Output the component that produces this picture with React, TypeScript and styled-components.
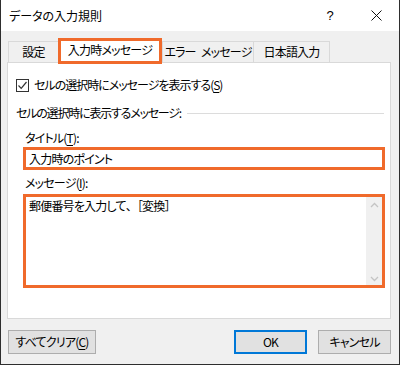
import React from "react";
import styled, { createGlobalStyle } from "styled-components";

const GlobalStyle = createGlobalStyle`
  html, body {
    margin: 0;
    padding: 0;
    background: #ffffff;
  }
  body {
    font-family: "Noto Sans CJK JP", "Noto Sans", "Liberation Sans", sans-serif;
    font-size: 12px;
    color: #000;
    font-feature-settings: "palt";
    letter-spacing: -0.8px;
  }
  * {
    box-sizing: border-box;
  }
`;

const ORANGE = "#f06a2b";

const Window = styled.div`
  width: 400px;
  height: 365px;
  display: flex;
  flex-direction: column;
  border: 1px solid #2e2e2e;
  border-top: none;
  background: #f0f0f0;
`;

const TitleBar = styled.div`
  height: 31px;
  flex-shrink: 0;
  display: flex;
  align-items: center;
  background: #ffffff;
  padding-left: 8px;
`;

const TitleText = styled.div`
  flex: 1;
  font-size: 12px;
  line-height: 16px;
  letter-spacing: 0;
`;

const TitleButton = styled.div<{ $w: number }>`
  width: ${(p) => p.$w}px;
  height: 31px;
  display: flex;
  align-items: center;
  justify-content: center;
  font-family: "Liberation Sans", sans-serif;
  font-size: 13px;
  letter-spacing: 0;
`;

const Body = styled.div`
  flex: 1;
  display: flex;
  flex-direction: column;
  padding: 7px 8px 0 6px;
`;

const TabRow = styled.div`
  display: flex;
  align-items: flex-end;
  padding-left: 1px;
`;

const Tab = styled.div<{ $w: number; $active?: boolean; $last?: boolean }>`
  width: ${(p) => p.$w}px;
  height: ${(p) => (p.$active ? 26 : 21)}px;
  display: flex;
  align-items: center;
  justify-content: center;
  white-space: pre;
  padding-bottom: ${(p) => (p.$active ? 2 : 0)}px;
  line-height: 16px;
  background: ${(p) => (p.$active ? "#ffffff" : "#f0f0f0")};
  border: ${(p) => (p.$active ? `3px solid ${ORANGE}` : "1px solid #d9d9d9")};
  border-right: ${(p) =>
    p.$active ? `3px solid ${ORANGE}` : p.$last ? "1px solid #d9d9d9" : "none"};
  border-bottom: ${(p) => (p.$active ? `3px solid ${ORANGE}` : "none")};
  margin-bottom: ${(p) => (p.$active ? -2 : 0)}px;
  position: relative;
  z-index: ${(p) => (p.$active ? 1 : 0)};
`;

const Panel = styled.div`
  height: 257px;
  flex-shrink: 0;
  background: #ffffff;
  border: 1px solid #d9d9d9;
  display: flex;
  flex-direction: column;
  padding: 0 5px 0 8px;
`;

const CheckRow = styled.label`
  display: flex;
  align-items: center;
  height: 16px;
  margin-top: 14px;
  gap: 5px;
  line-height: 16px;
  white-space: nowrap;
  letter-spacing: -1px;
`;

const CheckBox = styled.span`
  width: 13px;
  height: 13px;
  border: 1px solid #333333;
  background: #ffffff;
  display: flex;
  align-items: center;
  justify-content: center;
`;

const SectionHeader = styled.div`
  display: flex;
  align-items: center;
  height: 16px;
  margin-top: 12px;
  line-height: 16px;
  gap: 6px;
  padding-right: 1px;
  white-space: nowrap;
  letter-spacing: -1.2px;
`;

const SectionRule = styled.div`
  flex: 1;
  height: 1px;
  background: #dcdcdc;
`;

const Field = styled.div`
  display: flex;
  flex-direction: column;
  margin-left: 7px;
`;

const FieldLabel = styled.div<{ $top: number }>`
  height: 16px;
  line-height: 16px;
  padding-left: 2px;
  margin-top: ${(p) => p.$top}px;
`;

const TextBox = styled.div<{ $top: number }>`
  height: 23px;
  margin-top: ${(p) => p.$top}px;
  border: 3px solid ${ORANGE};
  background: #ffffff;
  display: flex;
  align-items: center;
  padding-left: 3px;
  line-height: 16px;
`;

const TextArea = styled.div<{ $top: number }>`
  height: 94px;
  margin-top: ${(p) => p.$top}px;
  border: 3px solid ${ORANGE};
  background: #ffffff;
  display: flex;
`;

const AreaText = styled.div`
  flex: 1;
  padding: 1px 0 0 3px;
  line-height: 16px;
`;

const FullWidth = styled.span`
  font-feature-settings: normal;
`;

const ScrollBar = styled.div`
  width: 16px;
  background: #f0f0f0;
  display: flex;
  flex-direction: column;
  justify-content: space-between;
  align-items: center;
  padding: 5px 0 3px;
`;

const ButtonRow = styled.div`
  display: flex;
  align-items: center;
  margin-top: 11px;
  padding-left: 1px;
  gap: 11px;
`;

const Button = styled.div<{ $w: number; $default?: boolean }>`
  width: ${(p) => p.$w}px;
  height: 24px;
  display: flex;
  align-items: center;
  justify-content: center;
  white-space: nowrap;
  background: #e1e1e1;
  border: ${(p) => (p.$default ? "2px solid #0078d7" : "1px solid #adadad")};
  line-height: 16px;
`;

const Spacer = styled.div`
  flex: 1;
`;

const Key = styled.span`
  text-decoration: underline;
  text-underline-offset: 2px;
`;

const Chevron: React.FC<{ up?: boolean }> = ({ up }) => (
  <svg width="9" height="6" viewBox="0 0 9 6">
    <path
      d={up ? "M1 5 L4.5 1.5 L8 5" : "M1 1 L4.5 4.5 L8 1"}
      fill="none"
      stroke="#c4c4c4"
      strokeWidth="1.3"
    />
  </svg>
);

export default function App() {
  return (
    <>
      <GlobalStyle />
      <Window>
        <TitleBar>
          <TitleText>データの入力規則</TitleText>
          <TitleButton $w={46}>?</TitleButton>
          <TitleButton $w={46}>
            <svg width="11" height="11" viewBox="0 0 11 11">
              <path d="M0.5 0.5 L10.5 10.5 M10.5 0.5 L0.5 10.5" stroke="#111" strokeWidth="1" />
            </svg>
          </TitleButton>
        </TitleBar>
        <Body>
          <TabRow>
            <Tab $w={50}>設定</Tab>
            <Tab $w={104} $active>
              入力時メッセージ
            </Tab>
            <Tab $w={91}>{"エラー\u2002メッセージ"}</Tab>
            <Tab $w={77} $last>
              日本語入力
            </Tab>
          </TabRow>
          <Panel>
            <CheckRow>
              <CheckBox>
                <svg width="11" height="11" viewBox="0 0 11 11">
                  <path d="M1.5 5.5 L4.2 8.3 L9.5 2" fill="none" stroke="#333" strokeWidth="1.2" />
                </svg>
              </CheckBox>
              <span>
                セルの選択時にメッセージを表示する(<Key>S</Key>)
              </span>
            </CheckRow>
            <SectionHeader>
              <span>セルの選択時に表示するメッセージ:</span>
              <SectionRule />
            </SectionHeader>
            <Field>
              <FieldLabel $top={9}>
                タイトル(<Key>T</Key>):
              </FieldLabel>
              <TextBox $top={1}>入力時のポイント</TextBox>
              <FieldLabel $top={5}>
                メッセージ(<Key>I</Key>):
              </FieldLabel>
              <TextArea $top={3}>
                <AreaText>
                  郵便番号を入力して<FullWidth>、［</FullWidth>変換<FullWidth>］</FullWidth>
                </AreaText>
                <ScrollBar>
                  <Chevron up />
                  <Chevron />
                </ScrollBar>
              </TextArea>
            </Field>
          </Panel>
          <ButtonRow>
            <Button $w={88}>
              すべてクリア(<Key>C</Key>)
            </Button>
            <Spacer />
            <Button $w={73} $default>
              OK
            </Button>
            <Button $w={73}>キャンセル</Button>
          </ButtonRow>
        </Body>
      </Window>
    </>
  );
}
